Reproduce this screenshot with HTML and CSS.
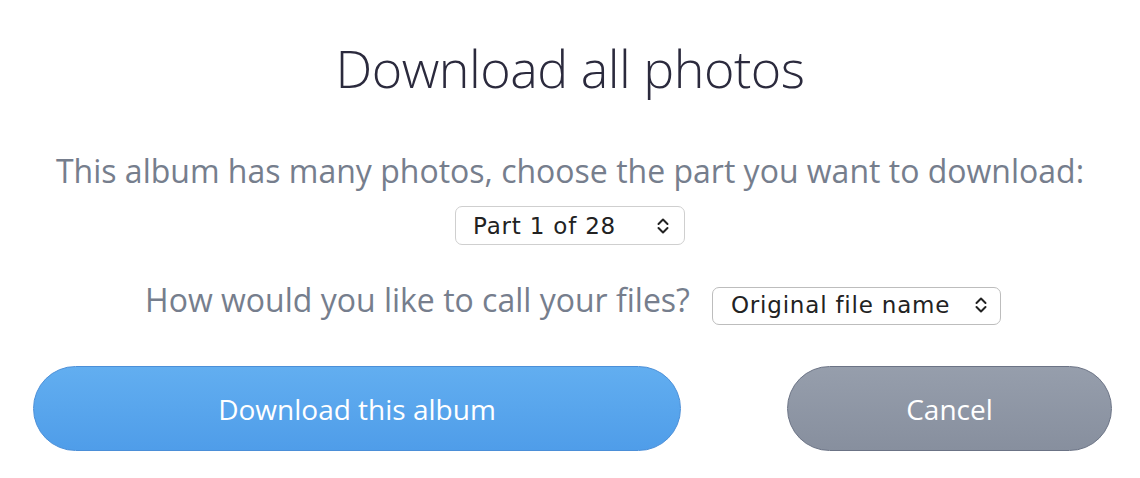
FILE: index.html
```html
<!DOCTYPE html>
<html>
<head>
<meta charset="utf-8">
<link rel="stylesheet" href="styles.css">
</head>
<body>
<div class="dialog">
  <h1 class="title">Download all photos</h1>
  <p class="intro">This album has many photos, choose the part you want to download:</p>
  <div class="select select-part">
    <span class="select-text">Part 1 of 28</span>
    <svg class="chev" width="14" height="18" viewBox="0 0 14 18"><path d="M2.5 7 L7 2.5 L11.5 7 M2.5 11 L7 15.5 L11.5 11" fill="none" stroke="#222" stroke-width="2" stroke-linecap="round" stroke-linejoin="round"/></svg>
  </div>
  <div class="name-row">
    <span class="label">How would you like to call your files?</span>
    <div class="select select-name">
      <span class="select-text">Original file name</span>
      <svg class="chev" width="14" height="18" viewBox="0 0 14 18"><path d="M2.5 7 L7 2.5 L11.5 7 M2.5 11 L7 15.5 L11.5 11" fill="none" stroke="#222" stroke-width="2" stroke-linecap="round" stroke-linejoin="round"/></svg>
    </div>
  </div>
  <div class="actions">
    <button class="btn btn-primary">Download this album</button>
    <button class="btn btn-cancel">Cancel</button>
  </div>
</div>
</body>
</html>
```
FILE: styles.css
```css
html, body { margin: 0; padding: 0; background: #fff; }
body { width: 1140px; height: 478px; overflow: hidden; font-family: "Open Sans", sans-serif; }
.dialog { display: flex; flex-direction: column; align-items: center; padding-top: 30px; }
.title { margin: 0; font-weight: 300; font-size: 52px; line-height: 76px; color: #2b2a3d; letter-spacing: -0.5px; }
.intro { margin: 47px 0 0; font-size: 32px; line-height: 36px; color: #767e8d; }
.select { display: flex; align-items: center; justify-content: space-between; box-sizing: border-box; border: 1px solid #cfcfcf; border-radius: 7px; background: #fff; font-family: "DejaVu Sans", sans-serif; font-size: 23px; letter-spacing: 0.8px; color: #222; }
.select-part { width: 230px; height: 39px; margin-top: 17px; padding: 0 14px 0 17px; }
.select-name { width: 289px; height: 38px; padding: 0 12px 2px 18px; border-color: #bdbdbd; }
.chev { flex: none; }
.name-row { display: flex; align-items: center; gap: 22px; margin: 36px 0 0 6px; }
.label { font-size: 32px; line-height: 38px; margin-bottom: 12px; color: #767e8d; }
.actions { display: flex; justify-content: space-between; width: 1079px; margin: 35px 0 0 5px; }
.btn { box-sizing: border-box; height: 85px; border-radius: 43px; font-family: "Open Sans", sans-serif; font-size: 28px; color: #fff; cursor: pointer; padding: 0; }
.btn-primary { width: 648px; background: linear-gradient(#62aef0, #4f9de9); border: 1px solid #4b8fd8; }
.btn-cancel { width: 325px; background: linear-gradient(#969eac, #878f9e); border: 1px solid #6b7385; }
```
